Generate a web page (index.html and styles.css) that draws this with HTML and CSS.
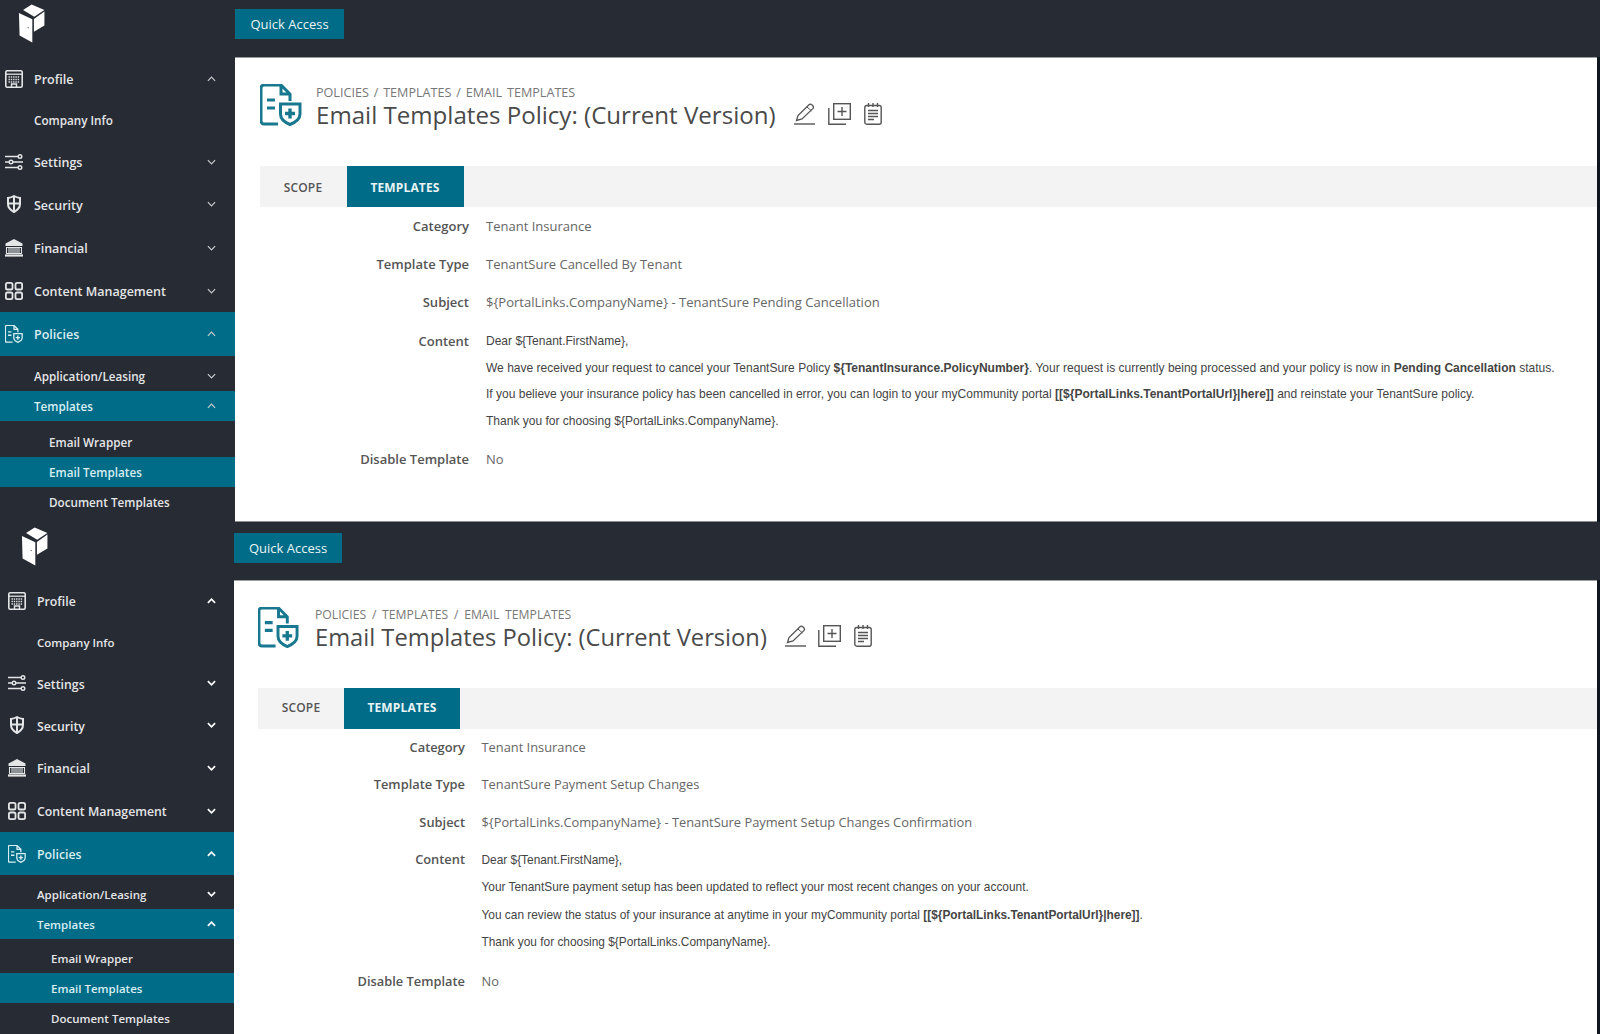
FILE: index.html
```html
<!DOCTYPE html>
<html lang="en">
<head>
<meta charset="utf-8">
<title>Email Templates Policy</title>
<link rel="stylesheet" href="styles.css">
</head>
<body>
<svg class="defs" width="0" height="0" aria-hidden="true">
  <symbol id="i-logo" viewBox="30 0 88 125">
    <path fill="#fff" d="M46 22 73 4l40 18-32 21z"/>
    <path fill="#fff" d="M80 50l33-24v44L80 90z"/>
    <path fill="#fff" d="M33 31l42 20v73L35 102z"/>
    <circle cx="62" cy="77" r="2" fill="#555"/>
  </symbol>
  <symbol id="i-building" viewBox="0 0 18 18">
    <rect x=".8" y=".8" width="16.400" height="16.400" rx="1.400" fill="none" stroke="currentColor" stroke-width="1.600"/>
    <path d="M1 4.200h16" stroke="currentColor" stroke-width="1.300"/>
    <path d="M3.500 7h11M3.500 9.500h11M3.500 12h11" stroke="currentColor" stroke-width="1.400" stroke-dasharray="1.400 .9"/>
    <path d="M6.500 17v-3h5v3" fill="none" stroke="currentColor" stroke-width="1.400"/>
  </symbol>
  <symbol id="i-sliders" viewBox="0 0 18 18">
    <path d="M0 3.500h13M0 9h4M8 9h10M0 14.500h13" stroke="currentColor" stroke-width="1.700"/>
    <circle cx="15" cy="3.500" r="1.800" fill="none" stroke="currentColor" stroke-width="1.400"/>
    <circle cx="6" cy="9" r="1.800" fill="none" stroke="currentColor" stroke-width="1.400"/>
    <circle cx="15" cy="14.500" r="1.800" fill="none" stroke="currentColor" stroke-width="1.400"/>
  </symbol>
  <symbol id="i-shield" viewBox="0 0 18 18">
    <path d="M9 1c2 1.200 4 1.700 6 1.900v6.100c0 3.700-2.700 6.200-6 8-3.300-1.800-6-4.300-6-8V2.900C5 2.700 7 2.200 9 1z" fill="none" stroke="currentColor" stroke-width="2"/>
    <path d="M9 2v14M3 8.500h12" stroke="currentColor" stroke-width="2"/>
  </symbol>
  <symbol id="i-bank" viewBox="0 0 18 18">
    <path d="M9 0 17.500 4.500v2.500H.5V4.500z" fill="currentColor"/>
    <path d="M1.500 8.500h15v6h-15z" fill="none" stroke="currentColor" stroke-width="1.100"/>
    <path d="M4 9v5M6 9v5M8 9v5M10 9v5M12 9v5M14 9v5" stroke="currentColor" stroke-width="1.100"/>
    <path d="M0 16.500h18" stroke="currentColor" stroke-width="2.200"/>
  </symbol>
  <symbol id="i-grid" viewBox="0 0 18 18">
    <g fill="none" stroke="currentColor" stroke-width="1.800">
      <rect x=".9" y=".9" width="6.600" height="6.600" rx="1.600"/>
      <rect x="10.500" y=".9" width="6.600" height="6.600" rx="1.600"/>
      <rect x=".9" y="10.500" width="6.600" height="6.600" rx="1.600"/>
      <rect x="10.500" y="10.500" width="6.600" height="6.600" rx="1.600"/>
    </g>
  </symbol>
  <symbol id="i-policy" viewBox="0 0 42 42">
    <path d="M18 40H4a3 3 0 0 1-3-3V4a3 3 0 0 1 3-3h17l9 9v7M21 1v9h9" fill="none" stroke="currentColor" stroke-width="3"/>
    <path d="M7 16h8M7 24h8" stroke="currentColor" stroke-width="3.200"/>
    <path d="M20.500 20h19.500v10c0 5-5 8.500-10 10.500-5-2-9.500-5.500-9.500-10.500z" fill="none" stroke="currentColor" stroke-width="3"/>
    <path d="M30 24.500v10M25 29.500h10" stroke="currentColor" stroke-width="3.400"/>
  </symbol>
  <symbol id="i-pencil" viewBox="0 0 21 22">
    <path d="M2.500 17.500 4 12.500 15 1.800c.8-.8 2-.8 2.800 0l1 1c.8.8.8 2 0 2.800L8 16z" fill="none" stroke="currentColor" stroke-width="1.300"/>
    <path d="M13 4l4.500 4" stroke="currentColor" stroke-width="1"/>
    <path d="M0 21h21" stroke="currentColor" stroke-width="1.400"/>
  </symbol>
  <symbol id="i-copy" viewBox="0 0 23 22">
    <rect x="5.700" y=".7" width="16.600" height="15.600" fill="none" stroke="currentColor" stroke-width="1.400"/>
    <path d="M14 4v9M9.500 8.500h9" stroke="currentColor" stroke-width="1.400"/>
    <path d="M.8 5v16.200H18" fill="none" stroke="currentColor" stroke-width="1.400"/>
  </symbol>
  <symbol id="i-notes" viewBox="0 0 18 22">
    <rect x=".8" y="2.500" width="16.400" height="18.700" rx="2" fill="none" stroke="currentColor" stroke-width="1.400"/>
    <path d="M4.500 0v4M9 0v4M13.500 0v4" stroke="currentColor" stroke-width="1.400"/>
    <path d="M4 7.500h10M4 10.500h10M4 13.500h10M4 16.500h6" stroke="currentColor" stroke-width="1.400"/>
  </symbol>
</svg>

<section class="shot shot-a">
  <nav class="side">
    <div class="logo"><svg class="logo-svg"><use href="#i-logo"/></svg></div>
    <a class="row"><svg class="ico"><use href="#i-building"/></svg><span class="lbl">Profile</span><svg class="chev up" viewBox="0 0 10 6"><path d="M1 5l4-4 4 4"/></svg></a>
    <a class="row plain"><span class="lbl">Company Info</span></a>
    <a class="row"><svg class="ico"><use href="#i-sliders"/></svg><span class="lbl">Settings</span><svg class="chev" viewBox="0 0 10 6"><path d="M1 1l4 4 4-4"/></svg></a>
    <a class="row"><svg class="ico"><use href="#i-shield"/></svg><span class="lbl">Security</span><svg class="chev" viewBox="0 0 10 6"><path d="M1 1l4 4 4-4"/></svg></a>
    <a class="row"><svg class="ico"><use href="#i-bank"/></svg><span class="lbl">Financial</span><svg class="chev" viewBox="0 0 10 6"><path d="M1 1l4 4 4-4"/></svg></a>
    <a class="row"><svg class="ico"><use href="#i-grid"/></svg><span class="lbl">Content Management</span><svg class="chev" viewBox="0 0 10 6"><path d="M1 1l4 4 4-4"/></svg></a>
    <a class="row band"><svg class="ico"><use href="#i-policy"/></svg><span class="lbl">Policies</span><svg class="chev" viewBox="0 0 10 6"><path d="M1 5l4-4 4 4"/></svg></a>
    <div class="sub">
      <a class="srow"><span class="lbl">Application/Leasing</span><svg class="chev" viewBox="0 0 10 6"><path d="M1 1l4 4 4-4"/></svg></a>
      <a class="srow on"><span class="lbl">Templates</span><svg class="chev" viewBox="0 0 10 6"><path d="M1 5l4-4 4 4"/></svg></a>
    </div>
    <div class="subsub">
      <a class="ssrow">Email Wrapper</a>
      <a class="ssrow on">Email Templates</a>
      <a class="ssrow">Document Templates</a>
    </div>
  </nav>
  <div class="main">
    <div class="top"><button class="quick">Quick Access</button></div>
    <div class="panel">
      <header class="head">
        <svg class="pico"><use href="#i-policy"/></svg>
        <div class="titles">
          <div class="crumb">POLICIES / TEMPLATES / EMAIL TEMPLATES</div>
          <h1 class="title">Email Templates Policy: (Current Version)</h1>
        </div>
        <div class="acts">
          <svg class="act a-pencil"><use href="#i-pencil"/></svg>
          <svg class="act a-copy"><use href="#i-copy"/></svg>
          <svg class="act a-notes"><use href="#i-notes"/></svg>
        </div>
      </header>
      <div class="tabs"><span class="tab t-scope">SCOPE</span><span class="tab t-temp">TEMPLATES</span></div>
      <div class="form">
        <div class="frow"><span class="k">Category</span><span class="v">Tenant Insurance</span></div>
        <div class="frow"><span class="k">Template Type</span><span class="v">TenantSure Cancelled By Tenant</span></div>
        <div class="frow"><span class="k">Subject</span><span class="v">${PortalLinks.CompanyName} - TenantSure Pending Cancellation</span></div>
        <div class="frow content"><span class="k">Content</span>
          <div class="body">
            <p>Dear ${Tenant.FirstName},</p>
            <p>We have received your request to cancel your TenantSure Policy <b>${TenantInsurance.PolicyNumber}</b>. Your request is currently being processed and your policy is now in <b>Pending Cancellation</b> status.</p>
            <p>If you believe your insurance policy has been cancelled in error, you can login to your myCommunity portal <b>[[${PortalLinks.TenantPortalUrl}|here]]</b> and reinstate your TenantSure policy.</p>
            <p>Thank you for choosing ${PortalLinks.CompanyName}.</p>
          </div>
        </div>
        <div class="frow"><span class="k">Disable Template</span><span class="v">No</span></div>
      </div>
    </div>
  </div>
</section>

<section class="shot shot-b">
  <nav class="side">
    <div class="logo"><svg class="logo-svg"><use href="#i-logo"/></svg></div>
    <a class="row"><svg class="ico"><use href="#i-building"/></svg><span class="lbl">Profile</span><svg class="chev up" viewBox="0 0 10 6"><path d="M1 5l4-4 4 4"/></svg></a>
    <a class="row plain"><span class="lbl">Company Info</span></a>
    <a class="row"><svg class="ico"><use href="#i-sliders"/></svg><span class="lbl">Settings</span><svg class="chev" viewBox="0 0 10 6"><path d="M1 1l4 4 4-4"/></svg></a>
    <a class="row"><svg class="ico"><use href="#i-shield"/></svg><span class="lbl">Security</span><svg class="chev" viewBox="0 0 10 6"><path d="M1 1l4 4 4-4"/></svg></a>
    <a class="row"><svg class="ico"><use href="#i-bank"/></svg><span class="lbl">Financial</span><svg class="chev" viewBox="0 0 10 6"><path d="M1 1l4 4 4-4"/></svg></a>
    <a class="row"><svg class="ico"><use href="#i-grid"/></svg><span class="lbl">Content Management</span><svg class="chev" viewBox="0 0 10 6"><path d="M1 1l4 4 4-4"/></svg></a>
    <a class="row band"><svg class="ico"><use href="#i-policy"/></svg><span class="lbl">Policies</span><svg class="chev" viewBox="0 0 10 6"><path d="M1 5l4-4 4 4"/></svg></a>
    <div class="sub">
      <a class="srow"><span class="lbl">Application/Leasing</span><svg class="chev" viewBox="0 0 10 6"><path d="M1 1l4 4 4-4"/></svg></a>
      <a class="srow on"><span class="lbl">Templates</span><svg class="chev" viewBox="0 0 10 6"><path d="M1 5l4-4 4 4"/></svg></a>
    </div>
    <div class="subsub">
      <a class="ssrow">Email Wrapper</a>
      <a class="ssrow on">Email Templates</a>
      <a class="ssrow">Document Templates</a>
    </div>
  </nav>
  <div class="main">
    <div class="top"><button class="quick">Quick Access</button></div>
    <div class="panel">
      <header class="head">
        <svg class="pico"><use href="#i-policy"/></svg>
        <div class="titles">
          <div class="crumb">POLICIES / TEMPLATES / EMAIL TEMPLATES</div>
          <h1 class="title">Email Templates Policy: (Current Version)</h1>
        </div>
        <div class="acts">
          <svg class="act a-pencil"><use href="#i-pencil"/></svg>
          <svg class="act a-copy"><use href="#i-copy"/></svg>
          <svg class="act a-notes"><use href="#i-notes"/></svg>
        </div>
      </header>
      <div class="tabs"><span class="tab t-scope">SCOPE</span><span class="tab t-temp">TEMPLATES</span></div>
      <div class="form">
        <div class="frow"><span class="k">Category</span><span class="v">Tenant Insurance</span></div>
        <div class="frow"><span class="k">Template Type</span><span class="v">TenantSure Payment Setup Changes</span></div>
        <div class="frow"><span class="k">Subject</span><span class="v">${PortalLinks.CompanyName} - TenantSure Payment Setup Changes Confirmation</span></div>
        <div class="frow content"><span class="k">Content</span>
          <div class="body">
            <p>Dear ${Tenant.FirstName},</p>
            <p>Your TenantSure payment setup has been updated to reflect your most recent changes on your account.</p>
            <p>You can review the status of your insurance at anytime in your myCommunity portal <b>[[${PortalLinks.TenantPortalUrl}|here]]</b>.</p>
            <p>Thank you for choosing ${PortalLinks.CompanyName}.</p>
          </div>
        </div>
        <div class="frow"><span class="k">Disable Template</span><span class="v">No</span></div>
      </div>
    </div>
  </div>
</section>
</body>
</html>
```

FILE: styles.css
```css
* { box-sizing: border-box; }
html, body { margin: 0; padding: 0; }
body {
  width: 1600px;
  height: 1034px;
  overflow: hidden;
  background: #272b33;
  font-family: "Open Sans", "Liberation Sans", sans-serif;
}
.defs { position: absolute; }

.shot { display: flex; overflow: hidden; }
.shot-a {
  height: 522px;
  --side: 235px;
  --r1: 41.6px;
  --r2: 41.6px;
  --r3: 42px;
  --r4: 42.4px;
  --r5: 44.4px;
  --r6: 42px;
  --band: 44px;
  --gap1: 5px;
  --gap2: 6px;
  --pad: 5px;
  --l1: 34px;
  --l2: 49px;
  --chev-r: 19px;
  --side-fs: 12.5px;
  --sub-fs: 11.7px;
  --chev: #c9ccd0;
  --chev-w: 1.3;
  --logo-x: 18px;
  --logo-y: 3px;
  --top-h: 57px;
  --q-top: 9px;
  --q-w: 109px;
  --p-pad: 24.5px;
  --head-h: 109px;
  --pico: 42px;
  --title-x: 14.5px;
  --title-size: 24.1px;
  --title-top: 1px;
  --crumb-fs: 12.6px;
  --crumb-ws: 1.6px;
  --act-x: 18px;
  --act-gap: 13px;
  --act-top: 20px;
  --tab1: 87px;
  --tab2: 117px;
  --tab-top: 2px;
  --tab-bot: 0px;
  --keys: 209.5px;
  --kgap: 17px;
  --form-fs: 13.03px;
  --form-top: 0px;
  --frow: 38px;
  --line: 26.5px;
  --body-fs: 12.03px;
  --ctop: 7px;
  --ktop: 7px;
  --cbot: 6px;
}
.shot-b {
  height: 512px;
  --side: 234px;
  --r1: 41.5px;
  --r2: 41px;
  --r3: 41.5px;
  --r4: 42.5px;
  --r5: 43px;
  --r6: 42.5px;
  --band: 43px;
  --gap1: 4px;
  --gap2: 4px;
  --pad: 8px;
  --l1: 37px;
  --l2: 51px;
  --chev-r: 18px;
  --side-fs: 12.3px;
  --sub-fs: 11.5px;
  --chev: #fff;
  --chev-w: 1.9;
  --logo-x: 21px;
  --logo-y: 4px;
  --top-h: 58px;
  --q-top: 11px;
  --q-w: 108px;
  --p-pad: 24px;
  --head-h: 108px;
  --pico: 41px;
  --title-x: 16px;
  --title-size: 23.7px;
  --title-top: 0px;
  --crumb-fs: 12.2px;
  --crumb-ws: 2.6px;
  --act-x: 18px;
  --act-gap: 12.5px;
  --act-top: 19px;
  --tab1: 86px;
  --tab2: 116px;
  --tab-top: 0px;
  --tab-bot: 2px;
  --keys: 207px;
  --kgap: 16.5px;
  --form-fs: 12.85px;
  --form-top: -0.7px;
  --frow: 37.3px;
  --line: 27.6px;
  --body-fs: 11.88px;
  --ctop: 6.300px;
  --ktop: 5.300px;
  --cbot: 5px;
}

/* sidebar */
.side { width: var(--side); flex: none; color: #e4e5e7; font-size: var(--side-fs); font-weight: 600; }
.logo { height: 58px; padding: var(--logo-y) 0 0 var(--logo-x); }
.logo-svg { display: block; width: 28px; height: 40px; }
.row, .srow, .ssrow { display: flex; align-items: center; }
.row { padding: 0 var(--chev-r) 0 var(--pad); }
.row:nth-child(2) { height: var(--r1); }
.row:nth-child(3) { height: var(--r2); }
.row:nth-child(4) { height: var(--r3); }
.row:nth-child(5) { height: var(--r4); }
.row:nth-child(6) { height: var(--r5); }
.row:nth-child(7) { height: var(--r6); }
.row.plain { padding-left: var(--l1); font-size: var(--sub-fs); }
.row.band { height: var(--band); background: #006c87; color: #d8eef3; }
.row:not(.plain) .lbl { padding-top: 1.5px; }
.ico { width: 18px; height: 18px; flex: none; margin-right: calc(var(--l1) - var(--pad) - 18px); color: #e4e5e7; }
.band .ico { color: #d8eef3; }
.lbl { flex: 1; }
.chev { width: 9px; height: 6px; flex: none; fill: none; stroke: var(--chev); stroke-width: var(--chev-w); }
.sub { padding-top: var(--gap1); font-size: var(--sub-fs); }
.srow { height: 30px; padding: 0 var(--chev-r) 0 var(--l1); }
.srow.on, .ssrow.on { background: #006c87; color: #d8eef3; }
.subsub { padding-top: var(--gap2); font-size: var(--sub-fs); }
.ssrow { height: 30px; padding-left: var(--l2); }

/* main */
.main { flex: 1; min-width: 0; display: flex; flex-direction: column; }
.top { height: var(--top-h); padding-top: var(--q-top); flex: none; }
.quick {
  display: block;
  width: var(--q-w);
  height: 30px;
  padding: 0;
  border: 0;
  background: #006c87;
  color: #eaf4f6;
  font: 400 13px "Open Sans", sans-serif;
}
.panel {
  flex: 1;
  margin-right: 3px;
  padding-left: var(--p-pad);
  background: #fff;
  box-shadow: 3px 0 0 #10161f;
  border-top: 1px solid #9a9ca0;
  border-bottom: 1px solid #8a8d92;
}
.shot-b .panel { border-bottom: 0; }
.head { height: calc(var(--head-h) - 1px); padding-top: 25px; display: flex; align-items: flex-start; }
.pico { width: var(--pico); height: var(--pico); flex: none; margin-top: 1px; color: #17788f; }
.titles { margin: var(--title-top) 0 0 var(--title-x); }
.crumb { padding-top: 1px; font-size: var(--crumb-fs); word-spacing: var(--crumb-ws); line-height: 16px; color: #777; white-space: nowrap; }
.title { margin: -1px 0 0; font-size: var(--title-size); line-height: 30px; font-weight: 400; color: #4a4a4a; white-space: nowrap; }
.acts { display: flex; gap: var(--act-gap); margin: var(--act-top) 0 0 var(--act-x); color: #555; }
.act { display: block; height: 22px; }
.a-pencil { width: 21px; }
.a-copy { width: 23px; }
.a-notes { width: 18px; }
.tabs { height: 41px; display: flex; background: #f3f3f3; }
.tab { display: flex; align-items: center; justify-content: center; padding: var(--tab-top) 0 var(--tab-bot); font-size: 12px; font-weight: 600; letter-spacing: .15px; }
.t-scope { width: var(--tab1); color: #555; }
.t-temp { width: var(--tab2); background: #006c87; color: #e8f3f5; font-weight: 700; }
.form { font-size: var(--form-fs); color: #666; margin-top: var(--form-top); }
.frow { display: flex; align-items: center; height: var(--frow); }
.frow.content { height: auto; align-items: flex-start; margin-bottom: var(--cbot); }
.k { width: var(--keys); flex: none; text-align: right; margin-right: var(--kgap); font-weight: 600; color: #555; }
.content .k { line-height: var(--line); margin-top: var(--ktop); }
.body { margin-top: var(--ctop); font-family: "Liberation Sans", sans-serif; font-size: var(--body-fs); line-height: var(--line); color: #444; white-space: nowrap; }
.body p { margin: 0; }
```
